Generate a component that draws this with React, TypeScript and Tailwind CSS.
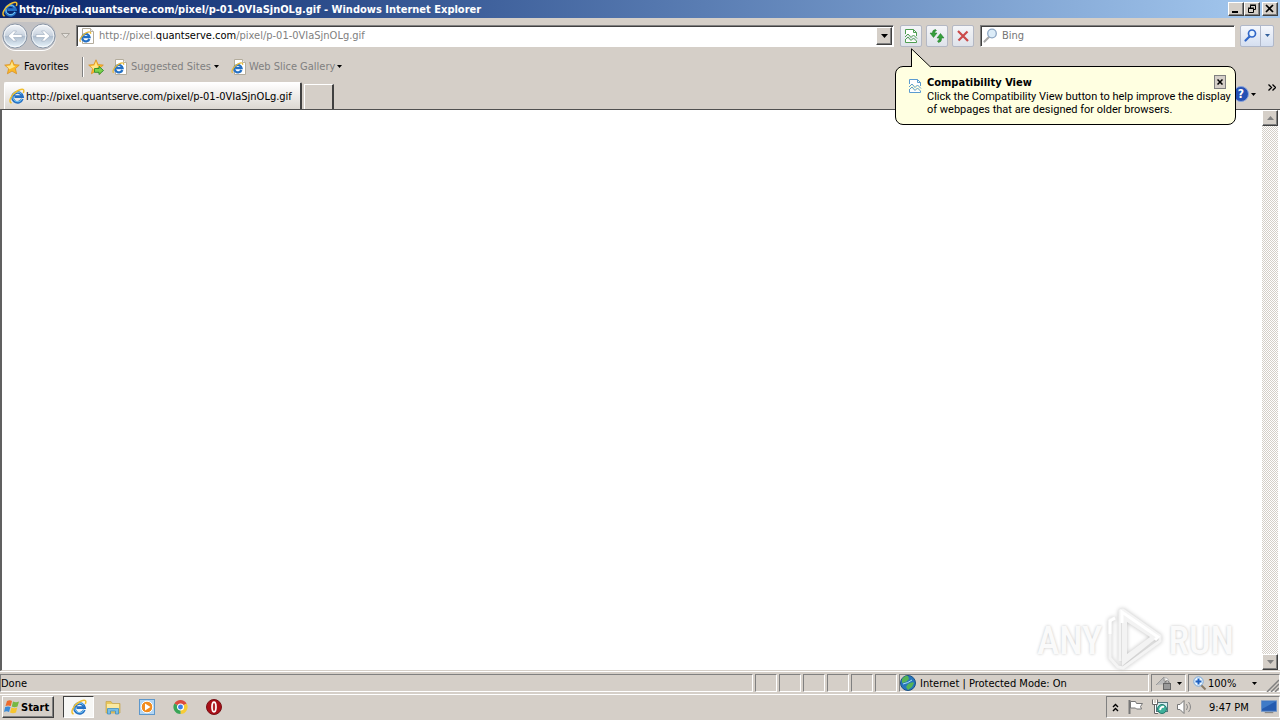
import React from "react";

const URL_HOST = "quantserve.com";

function IELogo({ size = 16 }: { size?: number }) {
  return (
    <svg width={size} height={size} viewBox="0 0 16 16" className="shrink-0" aria-hidden="true">
      <path d="M13.300 10.900A5 5 0 1 1 13.500 8.700H5.500" fill="none" stroke="#2470c4" strokeWidth="2.800" />
      <path d="M12.900 11A4.700 4.700 0 0 1 4 8.400M4 7.200A4.900 4.900 0 0 1 12.500 6" fill="none" stroke="#7fd0f7" strokeWidth="1" />
      <path d="M2.600 15C-1.400 13.700 2.500 6.300 8.200 3c3.700-2.100 7.100-2.500 6.600.3-.1.700-.3 1.100-.6 1.700" fill="none" stroke="#f0bf30" strokeWidth="1.500" />
    </svg>
  );
}

function PageIE() {
  return (
    <svg width="16" height="16" viewBox="0 0 16 16" className="shrink-0" aria-hidden="true">
      <path d="M3.500 .5h8l3 3v12h-11z" fill="#fff" stroke="#b3ac9c" />
      <path d="M11.500 .5v3h3" fill="#eee" stroke="#b9b2a3" />
      <path d="M10.400 11A3.700 3.700 0 1 1 10.600 9.200H4.500" fill="none" stroke="#2470c4" strokeWidth="2.200" />
      <path d="M1.700 13.800C-.8 12.500 3.500 6.500 7.700 4.600c2.500-1.100 4.500-.9 3.900 1.200" fill="none" stroke="#e6b834" strokeWidth="1.200" />
    </svg>
  );
}

function Star({ add = false }: { add?: boolean }) {
  return (
    <svg width="16" height="16" viewBox="0 0 16 16" className="shrink-0" aria-hidden="true">
      <path d="M8 .8l2.100 4.800 5.200.5-3.900 3.500 1.200 5.200L8 12.100l-4.600 2.700 1.200-5.200L.7 6.100l5.200-.5z" fill="#fbb927" stroke="#d99124" strokeWidth=".8" />
      <path d="M8 2.500l1.300 4.100 2 1-5.800 2.600L2.500 7l3.800-.5z" fill="#ffe68a" />
      {add && <path d="M6.500 9.500h4.500V7.300l4.500 4.200-4.500 4v-2.200H6.500z" fill="#7bd34c" stroke="#2b8a2b" strokeWidth=".9" />}
    </svg>
  );
}

function Caret({ color = "#000" }: { color?: string }) {
  return (
    <svg width="7" height="4" viewBox="0 0 7 4" className="shrink-0" aria-hidden="true">
      <path d="M0 0h7L3.500 4z" fill={color} />
    </svg>
  );
}

function SmallCaret() {
  return (
    <svg width="5" height="3" viewBox="0 0 5 3" className="shrink-0" aria-hidden="true">
      <path d="M0 0h5L2.500 3z" />
    </svg>
  );
}

function BrokenPage({ color }: { color: string }) {
  return (
    <svg width="14" height="16" viewBox="0 0 14 16" className="shrink-0" aria-hidden="true">
      <path d="M1.500 6V1.500h8l3 3V8M9.500 1.500v3h3M1.500 11v3.500h11V13" fill="#fff" stroke={color} />
      <path d="M1 9l3-3 3 3.500L9.500 7l3.500 3.500M1 12l3-3 3 3.500L9.500 10l3 3" fill="none" stroke={color} />
    </svg>
  );
}

function NavCircle({ back = false }: { back?: boolean }) {
  return (
    <svg width="26" height="26" viewBox="0 0 26 26" aria-hidden="true">
      <defs>
        <linearGradient id={back ? "navBack" : "navForward"} x1="0" y1="0" x2="0" y2="1">
          <stop offset="0" stopColor="#f3f6fa" />
          <stop offset=".48" stopColor="#c9d3df" />
          <stop offset=".5" stopColor="#adbccd" />
          <stop offset="1" stopColor="#eaf6fd" />
        </linearGradient>
      </defs>
      <circle cx="13" cy="13" r="12" fill={back ? "url(#navBack)" : "url(#navForward)"} stroke="#8a96a6" />
      <circle cx="13" cy="13" r="10.800" fill="none" stroke="#fff" strokeOpacity=".7" />
      <path
        d={back ? "M20 11.500h-8.500l3-3.500h-3L6 13l5.500 5h3l-3-3.500H20z" : "M6 11.500h8.500l-3-3.500h3L20 13l-5.500 5h-3l3-3.500H6z"}
        fill="#fff"
        stroke="#9aa9bc"
        strokeWidth=".6"
      />
    </svg>
  );
}

function Magnifier({ color, fill, bold = false }: { color: string; fill: string; bold?: boolean }) {
  return (
    <svg width="15" height="15" viewBox="0 0 15 15" className="shrink-0" aria-hidden="true">
      <path d={bold ? "M6.500 8.500l-4 4" : "M6 9l-4.500 4.500"} stroke={bold ? color : "#a9a9a9"} strokeWidth="2.200" strokeLinecap="round" />
      <circle cx="9" cy="5.500" r={bold ? 3.500 : 4.300} fill={fill} stroke={color} strokeWidth={bold ? 1.700 : 1.300} />
    </svg>
  );
}

const raised =
  "border border-t-white border-l-white border-r-[#404040] border-b-[#404040] bg-[#d5cfc8] shadow-[inset_-1px_-1px_0_#808080]";
const toolButton =
  "flex h-[22px] w-[22px] items-center justify-center rounded-xs border border-[#b4b8c4] bg-linear-to-b from-[#f4f5f8] to-[#dfe3ea]";
const sunken = "border border-t-[#808080] border-l-[#808080] border-r-white border-b-white";

function TitleBar() {
  return (
    <header className="flex h-[18px] items-center bg-linear-to-r from-[#0a246a] to-[#a6caf0] pr-[2px] pl-[2px]">
      <IELogo />
      <h1 className="ml-px flex-1 text-[11px] font-bold whitespace-nowrap text-white">
        http://pixel.quantserve.com/pixel/p-01-0VIaSjnOLg.gif - Windows Internet Explorer
      </h1>
      <button aria-label="Minimize" className={`flex h-[14px] w-4 items-center justify-center ${raised}`}>
        <svg width="10" height="10" viewBox="0 0 10 10"><path d="M1 8h6" stroke="#000" strokeWidth="2" /></svg>
      </button>
      <button aria-label="Restore" className={`flex h-[14px] w-4 items-center justify-center ${raised}`}>
        <svg width="10" height="10" viewBox="0 0 10 10">
          <path d="M3.500 4V1.500h5v4H7M3 1h6M1.500 4.500h5v4h-5zM1 4h6" fill="none" stroke="#000" />
        </svg>
      </button>
      <button aria-label="Close" className={`ml-[2px] flex h-[14px] w-4 items-center justify-center ${raised}`}>
        <svg width="10" height="10" viewBox="0 0 10 10"><path d="M1 1l7 7M8 1L1 8" stroke="#000" strokeWidth="1.700" /></svg>
      </button>
    </header>
  );
}

function AddressRow() {
  return (
    <nav className="flex h-[35px] items-center pr-[6px] pl-[2px]">
      <div className="flex h-7 items-center gap-[2px] rounded-full bg-[#c3c2c4] shadow-[0_1px_0_#fff]">
        <button aria-label="Back"><NavCircle back /></button>
        <button aria-label="Forward"><NavCircle /></button>
      </div>
      <button aria-label="Recent pages" className="ml-1 px-px">
        <svg width="9" height="6" viewBox="0 0 9 6"><path d="M.5 .5h8l-4 4.500z" fill="#e4e1dc" stroke="#aaa69f" /></svg>
      </button>
      <div className="ml-[5px] flex h-[22px] flex-1 items-center border border-t-[#808080] border-r-white border-b-white border-l-[#808080] bg-white pr-px pl-[2px] shadow-[inset_1px_1px_0_#404040]">
        <PageIE />
        <div className="ml-1 flex-1 whitespace-nowrap text-[#808080]">
          http://pixel.<span className="text-black">{URL_HOST}</span>/pixel/p-01-0VIaSjnOLg.gif
        </div>
        <button aria-label="Show addresses" className={`flex h-[18px] w-4 items-center justify-center ${raised}`}><Caret /></button>
      </div>
      <div className="ml-[6px] flex gap-1">
        <button aria-label="Compatibility View" className={toolButton}><BrokenPage color="#4f9e52" /></button>
        <button aria-label="Refresh" className={toolButton}>
          <svg width="16" height="16" viewBox="0 0 16 16">
            <path d="M6.500 1.500Q3 2 3.500 5H1l3.500 4.500L8 5H5.700Q5.500 3 7.500 2.500zM9.500 14.500q3.500-.5 3-4.500H15l-3.500-4.500L8 10h2.300q.2 2.500-1.800 3z" fill="#36a03b" stroke="#1f7628" strokeWidth=".5" />
          </svg>
        </button>
        <button aria-label="Stop" className={toolButton}>
          <svg width="14" height="14" viewBox="0 0 14 14"><path d="M2 2l10 10M11.500 2.500l-9 9" stroke="#cb4a4a" strokeWidth="2.200" /></svg>
        </button>
      </div>
      <label className="ml-[6px] flex h-[22px] w-[255px] items-center border border-t-[#808080] border-r-white border-b-white border-l-[#808080] bg-white pl-[2px] shadow-[inset_1px_1px_0_#404040]">
        <Magnifier color="#8ea7c4" fill="#dcecf8" />
        <input aria-label="Search" placeholder="Bing" className="ml-1 w-full min-w-0 bg-transparent outline-none placeholder:text-[#757575]" />
      </label>
      <div className="ml-[5px] flex h-[22px] w-[34px] rounded-xs border border-[#b0b8ca] bg-linear-to-b from-[#f5f7fc] to-[#d5dff0]">
        <button aria-label="Search the web" className="flex flex-1 items-center justify-center border-r border-[#b0b8ca]">
          <Magnifier color="#2f66c8" fill="#e8f4ff" bold />
        </button>
        <button aria-label="Search options" className="flex w-3 items-center justify-center text-[#33609c]">
          <svg width="5" height="3" viewBox="0 0 5 3"><path d="M0 0h5L2.500 3z" fill="currentColor" /></svg>
        </button>
      </div>
    </nav>
  );
}

function FavoritesRow() {
  return (
    <div className="flex h-[27px] items-center pl-1 whitespace-nowrap">
      <button className="flex w-[66px] items-center gap-1"><Star />Favorites</button>
      <div className="ml-3 h-5 w-[2px] border-l border-[#808080] bg-white" />
      <button aria-label="Add to Favorites Bar" className="ml-1"><Star add /></button>
      <button className="ml-2 flex w-[107px] items-center text-[#808080]">
        <PageIE /><span className="ml-[3px] flex-1 text-left">Suggested Sites</span><SmallCaret />
      </button>
      <button className="ml-3 flex w-[111px] items-center text-[#808080]">
        <PageIE /><span className="ml-[2px] flex-1 text-left">Web Slice Gallery</span><SmallCaret />
      </button>
    </div>
  );
}

function TabRow() {
  return (
    <div className="flex h-[29px] items-end pl-1">
      <button className="flex h-[27px] w-[298px] items-center rounded-t-xs border-t border-r-2 border-l border-t-white border-r-[#404040] border-l-white bg-linear-to-b from-white to-[#dcd8d2] pl-1 whitespace-nowrap">
        <IELogo /><span className="ml-px">http://pixel.quantserve.com/pixel/p-01-0VIaSjnOLg.gif</span>
      </button>
      <button aria-label="New Tab" className="ml-[2px] h-[25px] w-[30px] border-t border-r-2 border-l border-t-white border-r-[#404040] border-l-white" />
      <div className="flex-1" />
      <button aria-label="Help" className="mb-[7px] flex items-center gap-[2px]">
        <span className="flex h-4 w-4 items-center justify-center rounded-full border border-[#8aa4dc] bg-[#2551b4] text-[12px] leading-none font-bold text-white">?</span>
        <SmallCaret />
      </button>
      <button aria-label="More commands" className="mr-1 mb-[18px] ml-3">
        <svg width="8" height="7" viewBox="0 0 8 7"><path d="M.5 .5l3 3-3 3M4.500 .5l3 3-3 3" fill="none" stroke="#000" strokeWidth="1.300" /></svg>
      </button>
    </div>
  );
}

function Balloon() {
  return (
    <aside className="absolute top-[66px] right-11 z-10 flex h-[59px] w-[341px] rounded-[8px] border border-black bg-[#ffffe1] pt-[9px] pl-3 text-black">
      <svg width="22" height="20" viewBox="0 0 22 20" className="absolute -top-[19px] left-[15px]" aria-hidden="true">
        <path d="M.5 20V.8L19.500 18.500v1.500z" fill="#ffffe1" />
        <path d="M.5 19V.8l19 18.200" fill="none" stroke="#000" />
      </svg>
      <div className="pt-[2px]"><BrokenPage color="#5b9bd0" /></div>
      <div className="ml-[5px] flex flex-col gap-px leading-[13px] whitespace-nowrap">
        <h2 className="font-bold">Compatibility View</h2>
        <p className="font-['Roboto',sans-serif]">Click the Compatibility View button to help improve the display<br />of webpages that are designed for older browsers.</p>
      </div>
      <button aria-label="Close tip" className="absolute top-2 right-[9px] flex h-[14px] w-3 items-center justify-center border border-[#808080] bg-[#d5cfc8]">
        <svg width="6" height="6" viewBox="0 0 6 6"><path d="M.5 .5l5 5M5.500 .5l-5 5" stroke="#000" strokeWidth="1.500" /></svg>
      </button>
    </aside>
  );
}

function Watermark() {
  const word = "pt-1 font-['Roboto_Condensed','Roboto',sans-serif] text-[38px] leading-none font-medium text-[#fafafa] [text-shadow:0_0_3px_#c4c4c4]";
  return (
    <div className="absolute right-[28px] bottom-0 flex items-center gap-1">
      <span className={word}>ANY</span>
      <svg width="58" height="62" viewBox="0 0 58 62" className="drop-shadow-[0_0_2px_#c0c0c0]" aria-hidden="true">
        <path d="M9 10L4 12v38l8 9 5 1 37-27V28L17 2l-3 1v50" fill="none" stroke="#f4f4f4" strokeWidth="3" strokeLinejoin="round" />
        <path d="M16 4l36 25-36 29zM21 14v32l23-17z" fill="#f3f3f3" fillRule="evenodd" />
        <path d="M16 15V4l36 25-3 3M4 26V13l5-3" fill="none" stroke="#fff" strokeWidth="3" />
      </svg>
      <span className={word}>RUN</span>
    </div>
  );
}

function Content() {
  const track = "bg-[repeating-conic-gradient(#fff_0_25%,#d5cfc8_0_50%)] bg-[length:2px_2px]";
  const arrow = `flex h-4 w-4 items-center justify-center ${raised}`;
  return (
    <main className="relative flex min-h-0 flex-1 border-t border-b border-l-2 border-t-[#505050] border-b-[#d5cfc8] border-l-[#606060] bg-white">
      <div className="relative flex-1"><Watermark /></div>
      <div className={`mr-[2px] flex w-4 flex-col justify-between ${track}`}>
        <button aria-label="Scroll up" className={arrow}><span className="rotate-180"><Caret color="#808080" /></span></button>
        <button aria-label="Scroll down" className={arrow}><Caret color="#808080" /></button>
      </div>
    </main>
  );
}

function StatusBar() {
  return (
    <footer className="flex h-[23px] items-center gap-[2px] border-t border-white whitespace-nowrap">
      <div className={`flex h-[18px] flex-1 items-center ${sunken}`}>Done</div>
      {[0, 1, 2, 3, 4, 5].map((n) => <div key={n} className={`h-[18px] w-[22px] ${sunken}`} />)}
      <div className={`flex h-[18px] w-[250px] items-center gap-1 ${sunken}`}>
        <svg width="16" height="16" viewBox="0 0 16 16" aria-hidden="true">
          <circle cx="8" cy="8" r="7.500" fill="#2675bd" stroke="#185085" />
          <path d="M2 4q3-4 6-3l1 3-3 3-4 1zM8 9q5-3 6-1l-2 4-4 3-2-3z" fill="#55b356" />
          <path d="M3 9q5-1 9-4" stroke="#a8e0f3" fill="none" />
        </svg>
        Internet | Protected Mode: On
      </div>
      <button aria-label="InPrivate filtering" className={`flex h-[18px] w-[35px] items-center justify-center gap-1 ${sunken}`}>
        <svg width="18" height="16" viewBox="0 0 18 16">
          <path d="M1 10l8-8v4q3 0 4 3" fill="#bbb" stroke="#999" />
          <path d="M9 3q5-1 5 5" fill="#fff" stroke="#aaa" />
          <path d="M10 9V7q2-3 4 0v2" fill="none" stroke="#777" />
          <rect x="8.500" y="8.500" width="7" height="6" fill="#999" stroke="#666" />
        </svg>
        <SmallCaret />
      </button>
      <button className={`flex h-[18px] w-[92px] items-center pl-1 ${sunken}`}>
        <svg width="14" height="15" viewBox="0 0 14 15" aria-hidden="true">
          <path d="M8 9l4.500 4.500" stroke="#8a7b68" strokeWidth="2" />
          <circle cx="5.500" cy="5.500" r="4.700" fill="#e8f5ff" stroke="#78a7da" />
          <path d="M5.500 2.500v6M2.500 5.500h6" stroke="#1d5fc0" strokeWidth="2" />
        </svg>
        <span className="ml-px">100%</span>
        <span className="ml-4"><SmallCaret /></span>
        <svg width="14" height="14" viewBox="0 0 14 14" className="mt-1 ml-auto" aria-hidden="true">
          <path d="M2 14L14 2M6 14l8-8M10 14l4-4" stroke="#808080" strokeWidth="1.500" />
        </svg>
      </button>
    </footer>
  );
}

function Taskbar() {
  return (
    <footer className="flex h-[26px] items-center border-t border-white pb-px pl-[2px]">
      <button className={`flex h-[22px] w-[52px] items-center gap-px pl-px font-bold ${raised}`}>
        <svg width="16" height="16" viewBox="0 0 16 16" aria-hidden="true">
          <path d="M3 2q3-1.500 5 0L6.800 7Q4 6 1.500 7z" fill="#ed6b2d" />
          <path d="M9 2.500q3 1.500 6 0L13.500 7.500q-3 1.500-5.700 0z" fill="#76b843" />
          <path d="M1.200 8q3-1 5.300 0L5 13q-2.500-1.500-5 0z" fill="#3b8bd8" />
          <path d="M7.500 8.500q3 1.500 5.700 0L12 13.500q-3 1.500-6 0z" fill="#f6c52f" />
        </svg>
        Start
      </button>
      <button aria-label="Internet Explorer" className="ml-[9px] flex h-[22px] w-[31px] items-center justify-center border border-t-[#404040] border-r-white border-b-white border-l-[#404040] bg-[#f7f7f5]"><IELogo /></button>
      <div className="ml-[11px] flex items-center gap-[18px]">
        <button aria-label="File Explorer">
          <svg width="16" height="16" viewBox="0 0 16 16">
            <path d="M1 2.500h5l1.500 2H15V14H1z" fill="#e9c75b" stroke="#c5a34a" strokeWidth=".7" />
            <path d="M2 5h12v5H2z" fill="#fbe9a1" />
            <path d="M2.500 15V9.500h11V15h-3v-3h-5v3z" fill="#78bde6" stroke="#3f8fc2" strokeWidth=".8" />
          </svg>
        </button>
        <button aria-label="Media Player">
          <svg width="16" height="16" viewBox="0 0 16 16">
            <rect x=".5" y=".5" width="15" height="15" fill="#b3d6f3" stroke="#5d97cb" />
            <circle cx="8" cy="8" r="5.800" fill="#f28c1e" stroke="#fff" />
            <path d="M6 4.500v7L11.500 8z" fill="#fff" />
          </svg>
        </button>
        <button aria-label="Chrome">
          <svg width="15" height="16" viewBox="0 0 16 16">
            <path d="M8 8L1.500 4.200A7.500 7.500 0 0 1 14.500 4.200z" fill="#dc4b3e" />
            <path d="M8 8l6.500-3.800A7.500 7.500 0 0 1 8 15.500z" fill="#f7cc35" />
            <path d="M8 8v7.500A7.500 7.500 0 0 1 1.500 4.200z" fill="#39a556" />
            <circle cx="8" cy="8" r="3.200" fill="#3c82e8" stroke="#fff" strokeWidth="1.200" />
          </svg>
        </button>
        <button aria-label="Opera">
          <svg width="16" height="16" viewBox="0 0 16 16">
            <circle cx="8" cy="8" r="7.500" fill="#a90f17" stroke="#771015" />
            <ellipse cx="8" cy="8" rx="2" ry="4.800" fill="#b3272c" stroke="#fff" strokeWidth="1.700" />
          </svg>
        </button>
      </div>
      <div className={`ml-auto flex h-[22px] w-[174px] items-center pl-[5px] ${sunken}`}>
        <button aria-label="Show hidden icons">
          <svg width="7" height="9" viewBox="0 0 7 9"><path d="M1 4l2.500-2.500L6 4M1 8l2.500-2.500L6 8" fill="none" stroke="#000" strokeWidth="1.400" /></svg>
        </button>
        <div className="ml-2 flex items-center gap-2">
          <svg width="17" height="16" viewBox="0 0 17 16" aria-hidden="true">
            <path d="M2.500 1v14" stroke="#777" strokeWidth="2" />
            <path d="M3.500 2.500h5l1 2h6l-2 3 1 2.500h-5l-1-1h-5z" fill="#fff" stroke="#777" />
          </svg>
          <svg width="16" height="16" viewBox="0 0 16 16" aria-hidden="true">
            <rect x="4.500" y="3.500" width="11" height="9" fill="#d4eef1" stroke="#52777e" />
            <circle cx="10" cy="10" r="4.500" fill="#3eb19b" stroke="#23796d" />
            <path d="M8 11q1-4 4-3M1 1v4h4V1M3 5v9h3" fill="none" stroke="#fff" strokeWidth="2" />
            <path d="M.5 .5v5h5v-5M2.500 6v8.500H6" fill="none" stroke="#666" />
          </svg>
          <svg width="17" height="16" viewBox="0 0 17 16" aria-hidden="true">
            <path d="M1.500 5.500H4l4-4v13l-4-4H1.500z" fill="#fff" stroke="#777" />
            <path d="M10.500 5q2 3 0 6M12.500 3q4 5 0 10" fill="none" stroke="#888" />
          </svg>
        </div>
        <time className="ml-4 whitespace-nowrap">9:47 PM</time>
        <button aria-label="Show desktop" className="mr-[2px] ml-auto">
          <svg width="16" height="14" viewBox="0 0 17 14">
            <rect x=".5" y=".5" width="16" height="11" fill="#245bb0" stroke="#6a91c8" />
            <path d="M1 1h15L1 9z" fill="#3f7bc8" />
            <path d="M4 13h9" stroke="#777" />
          </svg>
        </button>
      </div>
    </footer>
  );
}

export default function App() {
  return (
    <div className="relative flex h-screen flex-col overflow-hidden bg-[#d5cfc8] font-['DejaVu_Sans_Condensed','DejaVu_Sans',sans-serif] text-[11px] leading-[13px] text-black">
      <TitleBar />
      <AddressRow />
      <FavoritesRow />
      <TabRow />
      <Content />
      <StatusBar />
      <Taskbar />
      <Balloon />
    </div>
  );
}
